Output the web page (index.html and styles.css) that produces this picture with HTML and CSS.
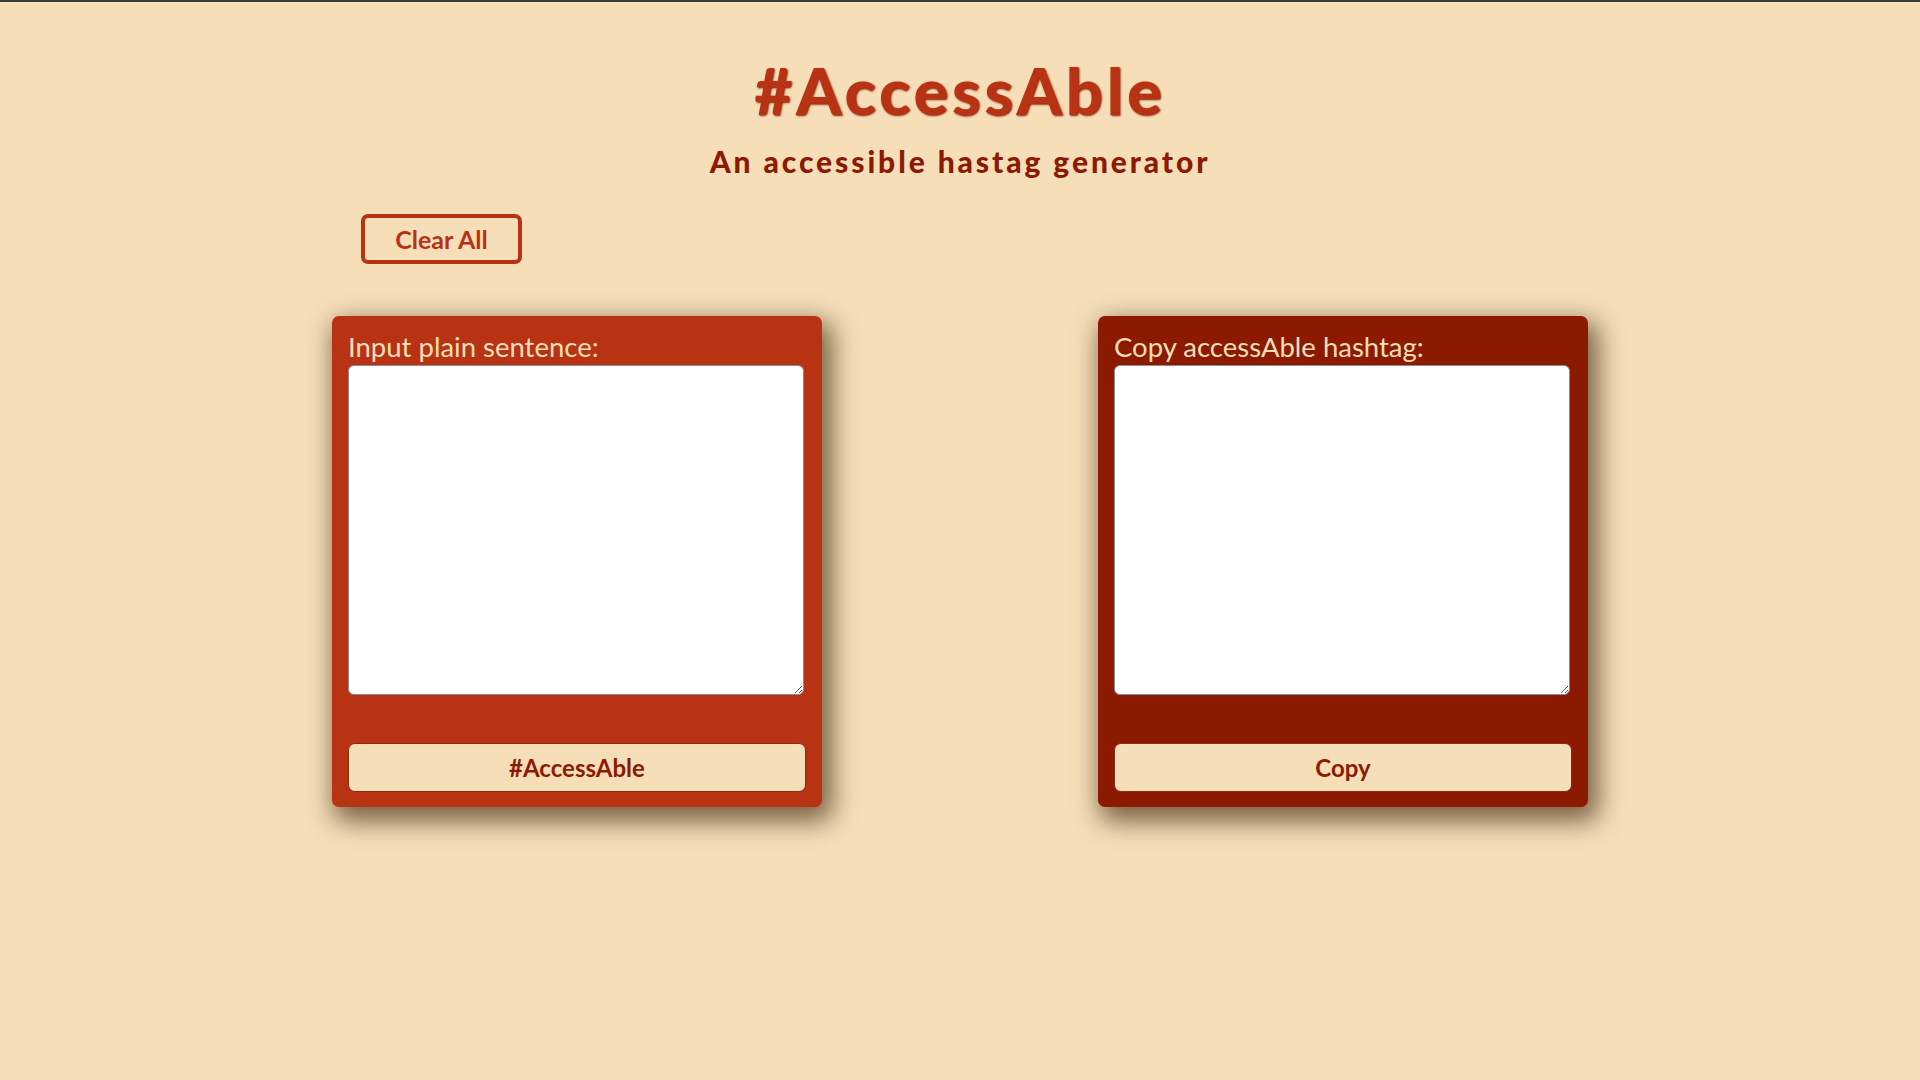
FILE: index.html
```html
<!DOCTYPE html>
<html lang="en">
<head>
<meta charset="utf-8">
<title>#AccessAble</title>
<link rel="stylesheet" href="styles.css">
</head>
<body>
<div class="topline"></div>
<header class="header">
  <h1 class="title">#AccessAble</h1>
  <h2 class="subtitle">An accessible hastag generator</h2>
</header>
<main class="main">
  <div class="toolbar">
    <button class="clear-btn" type="button">Clear All</button>
  </div>
  <div class="panels">
    <section class="panel panel-input">
      <label class="panel-label" for="input">Input plain sentence:</label>
      <textarea id="input" class="panel-text"></textarea>
      <button class="panel-btn" type="button">#AccessAble</button>
    </section>
    <section class="panel panel-output">
      <label class="panel-label" for="output">Copy accessAble hashtag:</label>
      <textarea id="output" class="panel-text"></textarea>
      <button class="panel-btn" type="button">Copy</button>
    </section>
  </div>
</main>
</body>
</html>
```
FILE: styles.css
```css
html, body {
  margin: 0;
  padding: 0;
}
body {
  background: #f5deb8;
  font-family: "Lato", "Open Sans", sans-serif;
  min-height: 1080px;
}
.topline {
  height: 2px;
  background: #3c3c3c;
}
.header {
  text-align: center;
  padding-top: 50px;
}
.title {
  margin: 0;
  font-size: 65px;
  line-height: 76px;
  font-weight: 900;
  letter-spacing: 3.7px;
  color: #b83214;
  text-shadow: 1px 1px 2px #8a1d05;
}
.subtitle {
  margin: 15px 0 0;
  font-size: 30px;
  line-height: 36px;
  font-weight: 900;
  letter-spacing: 2.9px;
  color: #8b1a00;
}
.main {
  width: 1256px;
  margin: 0 auto;
}
.toolbar {
  padding: 35px 0 0 29px;
}
.clear-btn {
  width: 161px;
  height: 50px;
  background: transparent;
  border: 4px solid #b83214;
  border-radius: 7px;
  color: #b83214;
  font-family: inherit;
  font-size: 25px;
  font-weight: 700;
  padding: 0;
  cursor: pointer;
}
.panels {
  display: flex;
  justify-content: space-between;
  margin-top: 52px;
}
.panel {
  width: 490px;
  height: 491px;
  box-sizing: border-box;
  border-radius: 7px;
  padding: 13px 16px 15px;
  display: flex;
  flex-direction: column;
  box-shadow: 6px 10px 26px 4px rgba(60, 35, 10, 0.68);
}
.panel-input {
  background: #b83214;
}
.panel-output {
  background: #8b1a00;
}
.panel-label {
  color: #f5deb8;
  font-size: 27.5px;
  line-height: 36px;
  font-weight: 400;
}
.panel-text {
  width: 456px;
  height: 330px;
  box-sizing: border-box;
  border: 1px solid #8e8e8e;
  border-radius: 6px;
  background: #fff;
  margin: 0;
  resize: both;
}
.panel-btn {
  margin-top: auto;
  width: 458px;
  height: 49px;
  background: #f5deb8;
  border: 1px solid #8e2a10;
  border-radius: 7px;
  color: #8b1a00;
  font-family: inherit;
  font-size: 24px;
  font-weight: 700;
  cursor: pointer;
}
```
